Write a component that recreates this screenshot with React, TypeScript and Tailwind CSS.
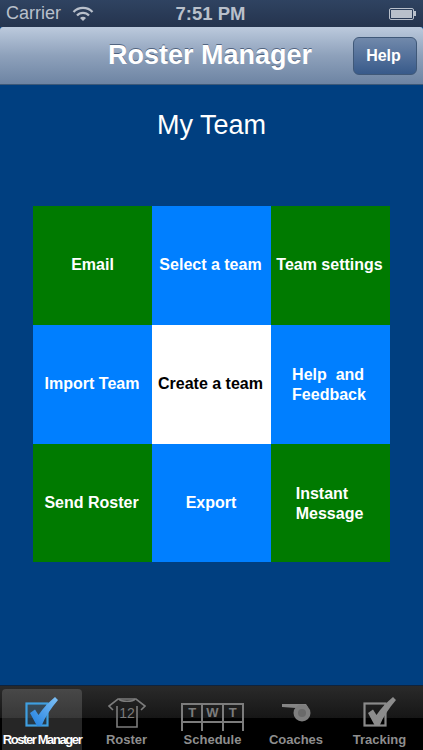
import React from 'react';

const FONT = "font-['Liberation_Sans',Arial,sans-serif]";

const tiles = [
	{ label: ['Email'], bg: 'bg-[#007a00]', fg: 'text-white', pad: 'pb-[2px]' },
	{ label: ['Select a team'], bg: 'bg-[#007fff]', fg: 'text-white', pad: 'pb-[2px] pr-[2px]' },
	{ label: ['Team settings'], bg: 'bg-[#007a00]', fg: 'text-white', pad: 'pb-[2px] pr-[2px]' },
	{ label: ['Import Team'], bg: 'bg-[#007fff]', fg: 'text-white', pad: 'pb-[2px] pr-[1px]' },
	{ label: ['Create a team'], bg: 'bg-white', fg: 'text-black', pad: 'pb-[2px] pr-[2px]' },
	{ label: ['Help  and', 'Feedback'], bg: 'bg-[#007fff]', fg: 'text-white', left: true, pad: 'pr-[3px]' },
	{ label: ['Send Roster'], bg: 'bg-[#007a00]', fg: 'text-white', pad: 'pr-[2px]' },
	{ label: ['Export'], bg: 'bg-[#007fff]', fg: 'text-white', pad: 'pr-[1px]' },
	{ label: ['Instant', 'Message'], bg: 'bg-[#007a00]', fg: 'text-white', left: true, pad: 'pt-[2px] pr-[2px]' },
];

const CheckIcon = ({ active }: { active?: boolean }) => {
	const box = active ? '#3f9fe0' : '#8a8a8a';
	const tick = active ? 'url(#tickBlue)' : '#8c8c8c';
	return (
		<svg width="34" height="32" viewBox="0 0 34 32">
			<defs>
				<linearGradient id="tickBlue" x1="0" y1="1" x2="1" y2="0">
					<stop offset="0" stopColor="#1f7fe0" />
					<stop offset="1" stopColor="#7fc0f5" />
				</linearGradient>
			</defs>
			<rect x="1.5" y="6.5" width="21" height="22" fill={active ? '#2a5f88' : 'none'} fillOpacity="0.35" stroke={box} strokeWidth="2.2" />
			<path d="M5 16l5-3.5 3.5 5.5C18 11 24 5 30 0l3 3C26 11 20 20 16.5 29h-4.5z" fill={tick} />
		</svg>
	);
};

const ShirtIcon = () => (
	<svg width="38" height="32" viewBox="0 0 38 32" fill="none" stroke="#7c7c7c" strokeWidth="1.6">
		<path d="M5 13L1 9 10 2h18l9 7-4 4" />
		<path d="M11 2c2 3 14 3 16 0" />
		<path d="M9 9v21h20V9" />
		<text x="19" y="21" textAnchor="middle" fontSize="14" fill="#7c7c7c" stroke="none" fontFamily="Liberation Sans">12</text>
	</svg>
);

const ScheduleIcon = () => (
	<div className="w-[63px] h-[28px] mt-[7px] flex flex-col">
		<div className="flex border-2 border-[#7c7c7c] h-[20px] text-[#7c7c7c] text-[13px] leading-[16px] text-center font-bold">
			<span className="flex-1 border-r-2 border-[#7c7c7c]">T</span>
			<span className="flex-1 border-r-2 border-[#7c7c7c]">W</span>
			<span className="flex-1">T</span>
		</div>
		<div className="flex flex-1 border-x-2 border-[#7c7c7c]">
			<span className="flex-1 border-r-2 border-[#7c7c7c]" />
			<span className="flex-1 border-r-2 border-[#7c7c7c]" />
			<span className="flex-1" />
		</div>
	</div>
);

const WhistleIcon = () => (
	<svg width="29" height="18" viewBox="0 0 29 18">
		<path d="M0 0h24l2 3-12 1L0 3z" fill="#858585" />
		<circle cx="20" cy="9" r="8.5" fill="#7e7e7e" />
		<circle cx="20" cy="9" r="4" fill="#6a6a6a" />
	</svg>
);

const tabs = [
	{ label: 'Roster Manager', icon: <CheckIcon active />, w: 'w-[80px]', active: true },
	{ label: 'Roster', icon: <ShirtIcon />, w: 'w-[89px]' },
	{ label: 'Schedule', icon: <ScheduleIcon />, w: 'w-[83px]' },
	{ label: 'Coaches', icon: <WhistleIcon />, w: 'w-[84px]' },
	{ label: 'Tracking', icon: <CheckIcon />, w: 'w-[83px]' },
];

export default function App() {
	return (
		<div className={`w-[423px] h-[750px] flex flex-col overflow-hidden bg-[#003f80] ${FONT}`}>
			{/* status bar */}
			<div className="h-[27px] flex items-center px-[6px] bg-gradient-to-b from-[#2f4361] to-[#25344e] text-[#b9c0cb] relative shrink-0">
				<span className="text-[18px]">Carrier</span>
				<svg className="ml-[11px]" width="22" height="16" viewBox="0 0 22 16" fill="none" stroke="#b9c0cb" strokeWidth="2.2">
					<path d="M1.5 6a13 13 0 0 1 19 0" />
					<path d="M5 9.5a8 8 0 0 1 12 0" />
					<path d="M11 15l-3-3a4 4 0 0 1 6 0z" fill="#b9c0cb" stroke="none" />
				</svg>
				<span className="absolute left-0 right-[2px] text-center text-[18.5px] font-bold">7:51 PM</span>
				<div className="ml-auto mr-[1px] flex items-center">
					<div className="w-[25px] h-[12px] border border-[#b9c0cb] rounded-[2px] p-[1px]">
						<div className="w-full h-full bg-[#b9c0cb]" />
					</div>
					<div className="w-[2px] h-[5px] bg-[#b9c0cb]" />
				</div>
			</div>
			{/* nav bar */}
			<div className="h-[58px] shrink-0 flex items-center justify-end pr-[6px] relative bg-gradient-to-b from-[#bccadd] via-[#8ea1bb] to-[#6d84a3] border-b border-[#3c5878] rounded-t-[3px]">
				<h1 className="absolute left-0 right-[3px] text-center text-[27px] font-bold text-white [text-shadow:0_-1px_0_rgba(60,80,110,0.8)]">Roster Manager</h1>
				<button className="relative w-[64px] h-[38px] rounded-[6px] border border-[#3f5878] bg-gradient-to-b from-[#7189ab] to-[#385a8a] text-white font-bold text-[16px] pr-[3px]">Help</button>
			</div>
			{/* content */}
			<div className="flex-1 flex flex-col items-center">
				<h2 className="mt-[22px] mb-[-1px] text-[27px] leading-[36px] text-white">My Team</h2>
				<div className="mt-[64px] grid grid-cols-[119px_119px_119px] grid-rows-[119px_119px_118px]">
					{tiles.map((tile, i) => (
						<div key={i} className={`flex items-center justify-center font-bold text-[16px] leading-[20px] whitespace-pre ${tile.pad} ${tile.left ? 'text-left' : 'text-center'} ${tile.bg} ${tile.fg}`}>
							<div>
								{tile.label.map((line) => (
									<div key={line}>{line}</div>
								))}
							</div>
						</div>
					))}
				</div>
			</div>
			{/* tab bar */}
			<div className="h-[65px] shrink-0 flex px-[2px] pt-[3px] border-t border-[#10233c] bg-[linear-gradient(#2a2a2a_0,#161616_50%,#000_50%,#000_100%)]">
				{tabs.map((tab) => (
					<div key={tab.label} className={`${tab.w} flex flex-col items-center rounded-t-[4px] ${tab.active ? 'bg-white/15' : ''}`}>
						<div className="h-[44px] flex items-center justify-center pt-[4px]">{tab.icon}</div>
						<span className={`text-[13px] font-bold leading-[14px] whitespace-nowrap ${tab.active ? 'text-white tracking-[-1.4px]' : 'text-[#8e8e8e]'}`}>{tab.label}</span>
					</div>
				))}
			</div>
		</div>
	);
}
